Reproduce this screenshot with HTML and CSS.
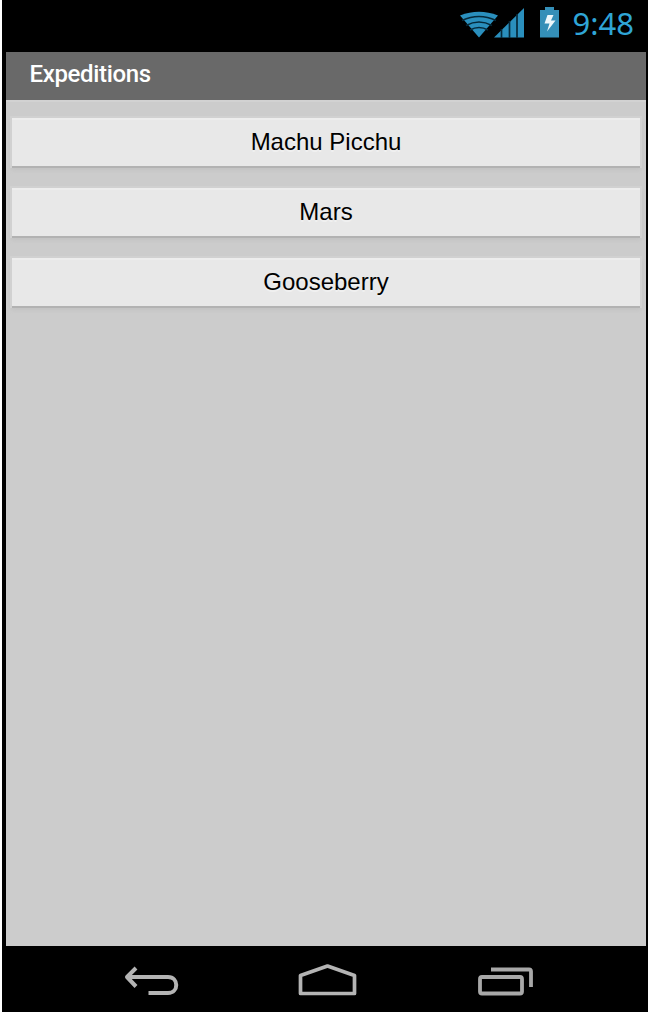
FILE: index.html
```html
<!DOCTYPE html>
<html lang="en">
<head>
<meta charset="utf-8">
<title>Expeditions</title>
<link rel="stylesheet" href="styles.css">
</head>
<body>
<div class="phone">
  <div class="status">
    <svg class="status-icons" width="104" height="52" viewBox="0 0 104 52" fill="#2a8fbd">
      <path d="M4 15.500Q23 8 42 15.500L23 37.500Z"/>
      <g fill="none" stroke="#05293a" stroke-width="1.500">
        <path d="M6 20.500Q23 12.500 40 20.500M10 25.500Q23 18.500 36 25.500M14 30Q23 25 32 30"/>
      </g>
      <path d="M38 37.500L68 8V37.500Z"/>
      <path d="M45.500 29V38M53.500 21V38M61 14V38" stroke="#05293a" stroke-width="1.700"/>
      <path d="M84 10h5V7h9v3h5v27.500H84Z" fill="#348fb8"/>
      <path d="M91.500 15h6l-2.500 5.500h4.500l-8.500 11 2.500-8h-5Z" fill="#edf7fb"/>
    </svg>
    <span class="clock">9:48</span>
  </div>
  <main class="screen">
    <h1 class="title">Expeditions</h1>
    <div class="list">
      <button class="item">Machu Picchu</button>
      <button class="item">Mars</button>
      <button class="item">Gooseberry</button>
    </div>
  </main>
  <nav class="navbar">
    <svg width="60" height="40" viewBox="120 960 60 40" fill="none" stroke="#b4b4b4" stroke-width="4" stroke-linejoin="round">
      <path d="M136 968L127 977L136 986.500M128 977H168C179 977 179 993 168 993H148.500"/>
    </svg>
    <svg width="64" height="40" viewBox="296 960 64 40" fill="none" stroke="#b4b4b4" stroke-width="3.700" stroke-linejoin="round">
      <path d="M300.500 975.500L327.500 966L354.500 975.500V993.500H300.500Z"/>
    </svg>
    <svg width="62" height="40" viewBox="474 960 62 40" fill="none" stroke="#a8a8a8" stroke-width="3.800" stroke-linejoin="round">
      <rect x="480" y="977" width="42" height="16.500" rx="2"/>
      <path d="M491 969.500H529Q531 969.500 531 971.500V987"/>
    </svg>
  </nav>
</div>
</body>
</html>
```
FILE: styles.css
```css
body {
  margin: 0;
  background: #fff;
}
.phone {
  box-sizing: border-box;
  height: 1012px;
  margin-left: 2px;
  padding: 0 2px 0 4px;
  background: #000;
  display: flex;
  flex-direction: column;
}
.status {
  height: 52px;
  display: flex;
  justify-content: flex-end;
  padding-right: 12px;
}
.status-icons {
  margin-right: 12px;
}
.clock {
  font: 31px/46px "Noto Sans", sans-serif;
  color: #2fa5d6;
}
.screen {
  height: 894px;
  background: #ccc;
}
.title {
  box-sizing: border-box;
  height: 48px;
  margin: 0;
  padding-left: 23.5px;
  background: #696969;
  color: #fff;
  font: 500 24px/44px Roboto, sans-serif;
  letter-spacing: -0.35px;
}
.list {
  border-top: 2px solid #d2d2d2;
  padding: 16px 6px 0;
  display: flex;
  flex-direction: column;
  gap: 22px;
}
.item {
  box-sizing: border-box;
  height: 48px;
  border: 0;
  border-top: 2px solid #ededed;
  padding: 0 0 2px;
  background: #e8e8e8;
  box-shadow: 0 2px 0 #b2b2b2, 0 0 0 2px #d1d1d1, 0 3px 4px 1px #c2c2c2;
  color: #000;
  font: 24px/44px "Liberation Sans", Arial, sans-serif;
  text-shadow: 0 2px 0 #f0f0f0;
}
.navbar {
  height: 66px;
  display: flex;
  align-items: flex-start;
  padding: 14px 0 0 114px;
  box-sizing: border-box;
}
.navbar svg + svg {
  margin-left: 116px;
}
.navbar svg + svg + svg {
  margin-left: 114px;
}
```
